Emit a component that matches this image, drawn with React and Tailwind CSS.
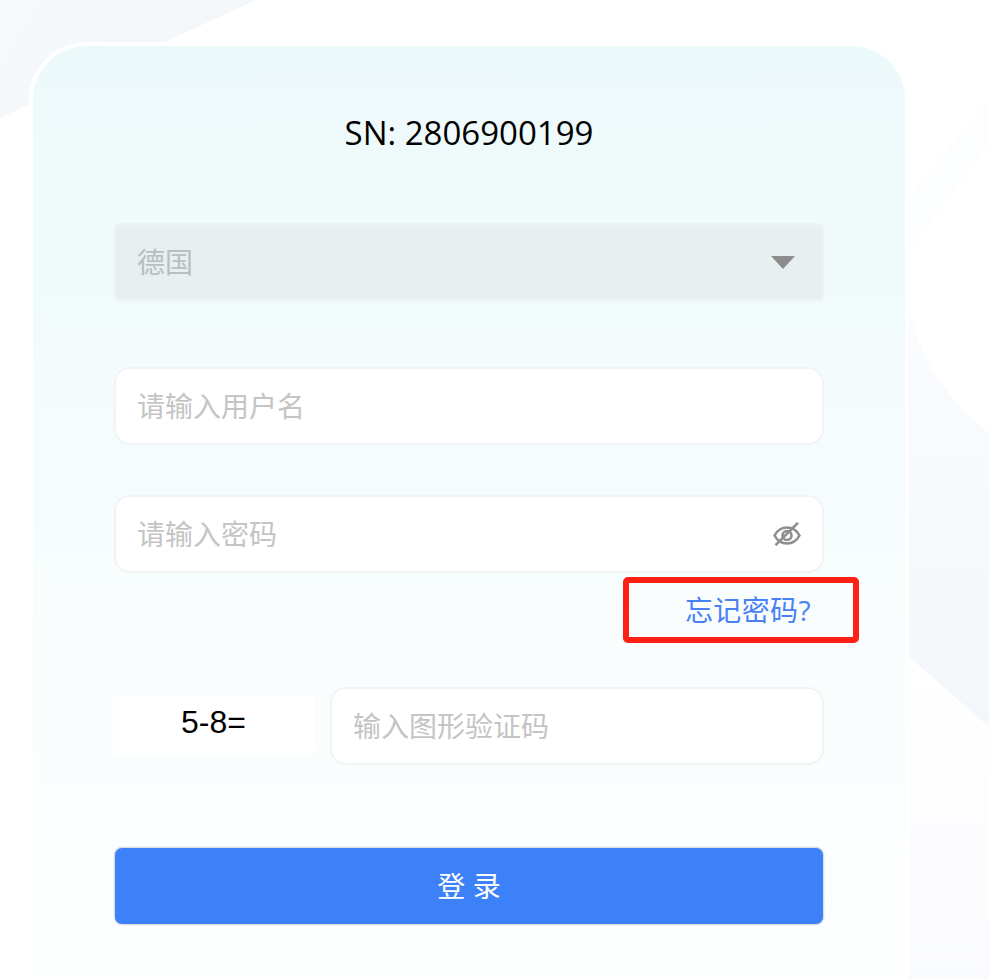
import React from "react";

const cjk = "font-['Open_Sans','Noto_Sans_CJK_SC',sans-serif]";

const BackgroundShapes = () => (
  <svg className="absolute inset-0" width="989" height="979" viewBox="0 0 989 979" fill="none">
    <defs>
      <linearGradient id="sideFill" x1="0" y1="300" x2="0" y2="730" gradientUnits="userSpaceOnUse">
        <stop offset="0" stopColor="#fafcfe" />
        <stop offset="1" stopColor="#f3f6fa" />
      </linearGradient>
      <linearGradient id="lowFill" x1="0" y1="660" x2="0" y2="979" gradientUnits="userSpaceOnUse">
        <stop offset="0" stopColor="#ffffff" />
        <stop offset="1" stopColor="#fafbfe" />
      </linearGradient>
      <linearGradient id="cornerFill" x1="0" y1="0" x2="200" y2="120" gradientUnits="userSpaceOnUse">
        <stop offset="0" stopColor="#f5f9fb" />
        <stop offset="1" stopColor="#f3f7fa" />
      </linearGradient>
    </defs>
    <polygon points="0,0 256,0 0,118" fill="url(#cornerFill)" />
    <polygon points="989,100 989,143 909,250 909,197" fill="#fcfdfe" />
    <path d="M989 433C948 400 920 360 909 307V657L989 727Z" fill="url(#sideFill)" />
    <polygon points="909,657 989,727 989,979 880,979" fill="url(#lowFill)" />
  </svg>
);

const EyeOff = () => (
  <svg className="mr-[-1px]" width="28" height="24" viewBox="0 0 28 24" fill="none" stroke="#8f8f8f" strokeWidth="2.6">
    <path d="M1.500 13.500C4.500 8 8.800 5.500 14 5.500S23.500 8 26.500 13.500C23.500 19 19.200 21.500 14 21.500S4.500 19 1.500 13.500Z" />
    <circle cx="14" cy="13.500" r="4.500" />
    <path d="M25 0.800L2.500 23.200" />
  </svg>
);

const Field = ({ placeholder, className = "", children }) => (
  <div className={`flex h-[78px] items-center rounded-2xl border-2 border-[#f2f3f5] bg-white pl-[21px] pr-[22px] ${className}`}>
    <input
      placeholder={placeholder}
      className="min-w-0 flex-1 bg-transparent text-[28px] text-black outline-none placeholder:text-[#c4c4c4]"
    />
    {children}
  </div>
);

export default function App() {
  return (
    <div className={`relative h-[979px] overflow-hidden bg-white ${cjk}`}>
      <BackgroundShapes />

      <div className="relative ml-[29px] mt-[42px] h-[985px] w-[880px] rounded-[58px] border-4 border-white bg-linear-to-b from-[#ecf9fa] via-[#f9fdfe] via-60% to-[#feffff] px-[81px] pt-[64px]">
        <h1 className="text-center text-[33px] leading-[46px] font-normal text-black">SN: 2806900199</h1>

        {/* country select, disabled */}
        <div className="mt-[67px] flex h-[78px] items-center justify-between rounded-md border-2 border-[#eef2f3] bg-[#e8eff0] pl-[21px] pr-[27px]">
          <span className="text-[28px] text-[#b9bebf]">德国</span>
          <span className="h-0 w-0 border-x-[12px] border-t-[13px] border-x-transparent border-t-[#8c8c8c]" />
        </div>

        <Field placeholder="请输入用户名" className="mt-[66px]" />
        <Field placeholder="请输入密码" className="mt-[50px]">
          <EyeOff />
        </Field>

        <div className="relative mt-[4px] flex h-[66px] items-center justify-end pr-[13px]">
          <a className="text-[28px] tracking-[0.4px] text-[#4a80f6]">忘记密码?</a>
          {/* red annotation frame */}
          <div className="absolute left-[509px] top-0 h-[66px] w-[236px] rounded-[5px] border-[6px] border-[#ff2015]" />
        </div>

        <div className="mt-[44px] flex items-center gap-4">
          <div className="-ml-px flex h-[60px] w-[201px] justify-center bg-white pt-[8px] font-['Liberation_Sans',sans-serif] text-[32px] leading-[36px] text-black">
            5-8=
          </div>
          <Field placeholder="输入图形验证码" className="flex-1" />
        </div>

        <button className="mt-[82px] flex h-[78px] w-full items-center justify-center rounded-lg border border-[#dcdfe2] bg-[#3d81f9] text-[28px] text-white shadow-[0_0_0_1px_#f2f3f4]">
          登 录
        </button>
      </div>
    </div>
  );
}
